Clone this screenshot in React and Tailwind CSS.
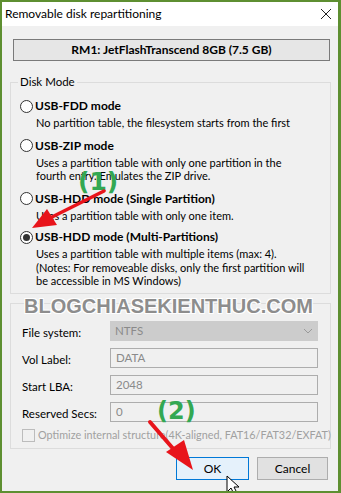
const font = { fontFamily: 'Lato, "Noto Sans", sans-serif' };

function Radio({ checked }) {
  return (
    <span className="flex h-[13px] w-[13px] shrink-0 items-center justify-center rounded-full border border-[#333] bg-white">
      {checked && <span className="h-[7px] w-[7px] rounded-full bg-[#333]" />}
    </span>
  );
}

function Mode({ title, lines, checked, className }) {
  return (
    <div className={className}>
      <div className="flex h-[18px] items-center gap-[2px]">
        <Radio checked={checked} />
        <span className="text-[12px] font-bold leading-[18px] text-black">{title}</span>
      </div>
      <div className="mt-[1px] pl-[16px] text-[11px] leading-[13.5px] text-black">
        {lines.map((l) => (
          <div key={l}>{l}</div>
        ))}
      </div>
    </div>
  );
}

function Field({ label, value, select }) {
  return (
    <div className="flex h-[20px] items-center">
      <span className="w-[88px] pt-[3px] text-[11.5px] text-black">{label}</span>
      <div
        className={`flex h-[20px] w-[208px] items-center justify-between px-[5px] text-[11.5px] text-[#8a8a8a] ${
          select ? "bg-[#cccccc]" : "border border-[#adadad] bg-[#f0f0f0]"
        }`}
      >
        <span>{value}</span>
        {select && (
          <svg width="10" height="6" viewBox="0 0 10 6">
            <path d="M1 1 L5 5 L9 1" fill="none" stroke="#9a9a9a" strokeWidth="1" />
          </svg>
        )}
      </div>
    </div>
  );
}

export default function App() {
  return (
    <div
      className="relative h-[493px] w-[341px] overflow-hidden border-2 border-r-[3px] border-[#5e8f31] bg-[#f0f0f0]"
      style={font}
    >
      {/* title bar */}
      <div className="flex h-[24px] items-center justify-between bg-white pl-[3px] pr-[6px]">
        <span className="text-[12px] text-black">Removable disk repartitioning</span>
        <svg width="12" height="12" viewBox="0 0 12 12">
          <path d="M1 1 L11 11 M11 1 L1 11" stroke="#222" strokeWidth="1" />
        </svg>
      </div>

      {/* device */}
      <div className="ml-[11px] mt-[13px] flex h-[22px] w-[317px] items-center justify-center border border-[#7a7a7a] bg-[#e6e6e6] text-[12px] font-bold text-black">
        RM1: JetFlashTranscend 8GB (7.5 GB)
      </div>

      {/* disk mode */}
      <fieldset className="ml-[8px] mt-[14px] h-[219px] w-[321px] border border-[#dcdcdc] pl-[9px]">
        <legend className="ml-[-2px] px-[2px] text-[11.5px] leading-[14px] text-black">Disk Mode</legend>
        <Mode className="mt-[8px]" title="USB-FDD mode" lines={["No partition table, the filesystem starts from the first"]} />
        <Mode
          className="mt-[7px]"
          title="USB-ZIP mode"
          lines={["Uses a partition table with only one partition in the", "fourth entry. Emulates the ZIP drive."]}
        />
        <Mode className="mt-[7px]" title="USB-HDD mode (Single Partition)" lines={["Uses a partition table with only one item."]} />
        <Mode
          className="mt-[6px]"
          checked
          title="USB-HDD mode (Multi-Partitions)"
          lines={[
            "Uses a partition table with multiple items (max: 4).",
            "(Notes: For removeable disks, only the first partition will",
            "be accessible in MS Windows)",
          ]}
        />
      </fieldset>

      {/* format options */}
      <div className="ml-[8px] mt-[9px] flex h-[146px] w-[321px] flex-col gap-[7px] border border-[#dcdcdc] pl-[11px] pt-[17px]">
        <Field label="File system:" value="NTFS" select />
        <Field label="Vol Label:" value="DATA" />
        <Field label="Start LBA:" value="2048" />
        <Field label="Reserved Secs:" value="0" />
        <div className="mt-[-2px] flex items-center gap-[3px]">
          <span className="h-[13px] w-[13px] shrink-0 border border-[#bcbcbc] bg-[#f0f0f0]" />
          <span className="whitespace-nowrap text-[10.8px] text-[#a0a0a0]">Optimize internal structure(4K-aligned, FAT16/FAT32/EXFAT)</span>
        </div>
      </div>

      {/* buttons */}
      <div className="mr-[10px] mt-[8px] flex justify-end gap-[8px]">
        <button className="h-[23px] w-[73px] border border-[#0078d7] bg-[#e5f1fb] text-[12px] text-black">OK</button>
        <button className="h-[23px] w-[71px] border border-[#adadad] bg-[#e1e1e1] text-[12px] text-black">Cancel</button>
      </div>

      {/* watermark */}
      <div
        className="absolute left-[22px] top-[294px] whitespace-nowrap text-[20px] font-bold leading-[20px] text-[#8d8d8d]"
        style={{
          fontFamily: '"Liberation Sans", Arial, sans-serif',
          textShadow: "1px 1px 0 #fff, -1px -1px 0 #fff, 1px -1px 0 #fff, -1px 1px 0 #fff",
        }}
      >
        BLOGCHIASEKIENTHUC.COM
      </div>

      {/* annotations */}
      <div className="absolute left-[76px] top-[165px] text-[25px] font-bold leading-[30px] text-[#33a852]" style={{ fontFamily: '"DejaVu Sans", sans-serif' }}>
        (1)
      </div>
      <div className="absolute left-[155px] top-[395px] text-[24px] font-bold leading-[28px] text-[#33a852]" style={{ fontFamily: '"DejaVu Sans", sans-serif' }}>
        (2)
      </div>
      <svg className="absolute left-[-2px] top-[-2px]" width="341" height="493" viewBox="0 0 341 493">
        <path d="M104 191 L50 218" stroke="#e8141b" strokeWidth="3.5" strokeLinecap="round" />
        <path d="M32 228 L47 209 L57 225 Z" fill="#e8141b" />
        <path d="M150 422 L176 452" stroke="#e8141b" strokeWidth="4" strokeLinecap="round" />
        <path d="M193 470 L166 452 L184 440 Z" fill="#e8141b" />
        <path d="M227 476 L227 492 L231 488 L234 494 L237 493 L234 487 L239 487 Z" fill="#fff" stroke="#000" strokeWidth="1" />
      </svg>
    </div>
  );
}
